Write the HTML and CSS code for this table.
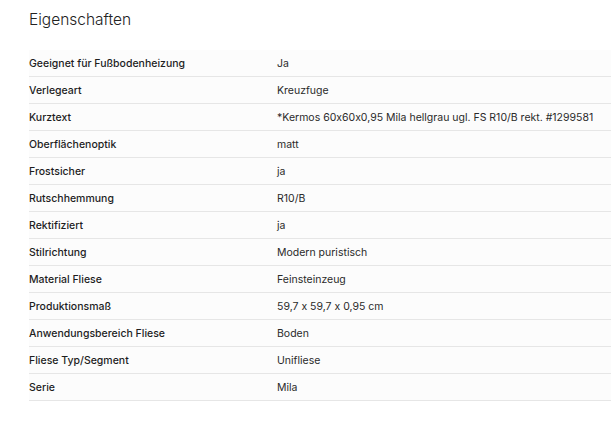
FILE: index.html
```html
<!DOCTYPE html>
<html lang="de">
<head>
<meta charset="utf-8">
<link rel="stylesheet" href="styles.css">
</head>
<body>
<section class="props">
  <h2 class="props-title">Eigenschaften</h2>
  <div class="props-table">
    <div class="row"><div class="k">Geeignet für Fußbodenheizung</div><div class="v">Ja</div></div>
    <div class="row"><div class="k">Verlegeart</div><div class="v">Kreuzfuge</div></div>
    <div class="row"><div class="k">Kurztext</div><div class="v">*Kermos 60x60x0,95 Mila hellgrau ugl. FS R10/B rekt. #1299581</div></div>
    <div class="row"><div class="k">Oberflächenoptik</div><div class="v">matt</div></div>
    <div class="row"><div class="k">Frostsicher</div><div class="v">ja</div></div>
    <div class="row"><div class="k">Rutschhemmung</div><div class="v">R10/B</div></div>
    <div class="row"><div class="k">Rektifiziert</div><div class="v">ja</div></div>
    <div class="row"><div class="k">Stilrichtung</div><div class="v">Modern puristisch</div></div>
    <div class="row"><div class="k">Material Fliese</div><div class="v">Feinsteinzeug</div></div>
    <div class="row"><div class="k">Produktionsmaß</div><div class="v">59,7 x 59,7 x 0,95 cm</div></div>
    <div class="row"><div class="k">Anwendungsbereich Fliese</div><div class="v">Boden</div></div>
    <div class="row"><div class="k">Fliese Typ/Segment</div><div class="v">Unifliese</div></div>
    <div class="row"><div class="k">Serie</div><div class="v">Mila</div></div>
  </div>
</section>
</body>
</html>
```
FILE: styles.css
```css
html, body {
  margin: 0;
  padding: 0;
  background: #ffffff;
}
body {
  font-family: Inter, "Liberation Sans", Arial, sans-serif;
  font-feature-settings: "calt" 0;
  color: #222222;
}
.props {
  padding: 10px 0 0 29px;
}
.props-title {
  margin: 0 0 20px 0;
  font-size: 15.5px;
  font-weight: 300;
  line-height: 20px;
  color: #222222;
}
.props-table {
  display: flex;
  flex-direction: column;
}
.row {
  display: grid;
  grid-template-columns: 248px 1fr;
  height: 26px;
  align-items: center;
  background: #fcfcfc;
  border-bottom: 1px solid #e6e6e6;
  font-size: 10.5px;
}
.k {
  font-weight: 500;
  color: #1e1e1e;
}
.v {
  font-weight: 400;
  color: #2a2a2a;
  white-space: nowrap;
}
```
